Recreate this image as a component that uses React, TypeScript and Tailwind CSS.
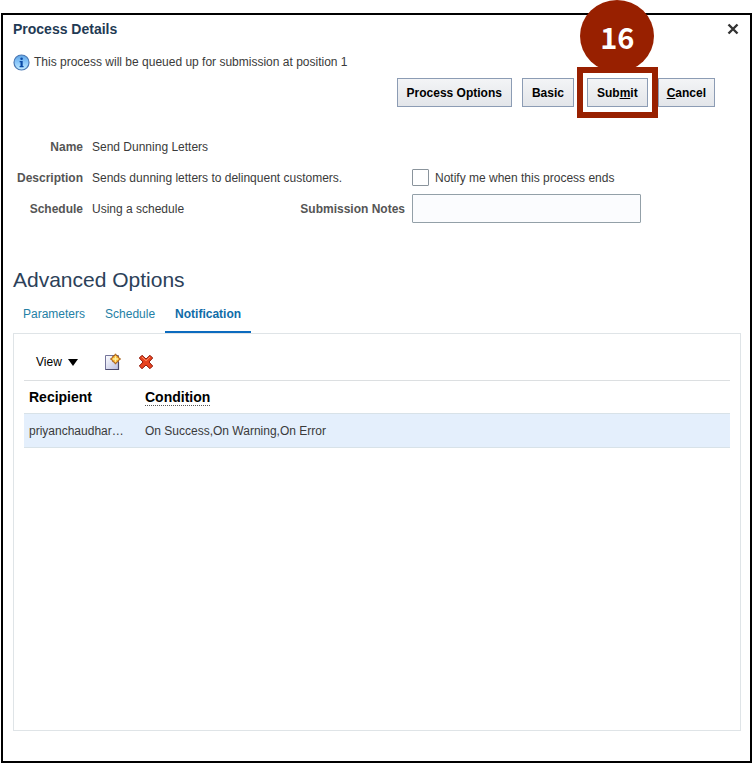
import React from 'react';

interface Notification {
  recipient: string;
  condition: string;
}

const notifications: Notification[] = [
  { recipient: 'priyanchaudhar…', condition: 'On Success,On Warning,On Error' },
];

const tabs = ['Parameters', 'Schedule', 'Notification'];

const buttonClass =
  'h-[29px] border border-[#8c9cb4] bg-linear-to-b from-[#f3f4f6] to-[#e3e6ea] font-bold text-black whitespace-nowrap';

const InfoIcon: React.FC = () => (
  <svg width="17" height="17" viewBox="0 0 17 17" aria-hidden="true">
    <defs>
      <linearGradient id="info" x1="0" y1="0" x2="0" y2="1">
        <stop offset="0" stopColor="#5fa5e6" />
        <stop offset="0.5" stopColor="#8cc8fa" />
        <stop offset="1" stopColor="#c4ecff" />
      </linearGradient>
    </defs>
    <circle cx="8.5" cy="8.5" r="7.5" fill="url(#info)" stroke="#4a78b4" strokeWidth="1.2" />
    <circle cx="8.6" cy="4.7" r="1.3" fill="#0b4aa6" />
    <path d="M6.6 7h3.1v5h.9v1.2H6.600V12h.9V8.200h-.9z" fill="#0b4aa6" />
  </svg>
);

const CreateIcon: React.FC = () => (
  <svg width="17" height="18" viewBox="0 0 17 18" aria-hidden="true">
    <defs>
      <linearGradient id="page" x1="0" y1="0" x2="1" y2="1">
        <stop offset="0" stopColor="#ffffff" />
        <stop offset="1" stopColor="#b9bde0" />
      </linearGradient>
    </defs>
    <path d="M1.500 2.500h13v14h-13z" fill="url(#page)" stroke="#74749a" />
    <path d="M14.500 9v7.500h-13" fill="none" stroke="#4a4a6c" strokeWidth="1.200" />
    <path d="M11.500 .8l1.500 2.200 1.300.3.300 1.300L16.600 6l-2 1.400-.3 1.300-1.300.3-1.500 2.200L10 9l-1.300-.3-.3-1.300L6.400 6l2-1.400.3-1.300L10 3z" fill="#f3a92a" stroke="#9a5416" strokeWidth="0.9" />
    <path d="M11.500 3.300v5.400M8.800 6h5.400" stroke="#fff3a0" strokeWidth="1.600" />
  </svg>
);

const DeleteIcon: React.FC = () => (
  <svg width="16" height="16" viewBox="0 0 16 16" aria-hidden="true">
    <path
      d="M4 1.300L8 5l4-3.700L14.700 4 11 8l3.700 4-2.700 2.700L8 11l-4 3.700L1.300 12 5 8 1.300 4z"
      fill="#e8431f"
      stroke="#8f1a0c"
      strokeLinejoin="round"
    />
    <path d="M4 3l4 3.700L12 3" fill="none" stroke="#ff9468" strokeWidth="1" />
  </svg>
);

const Callout: React.FC<{ step: number }> = ({ step }) => (
  <>
    <span className="absolute -top-[78px] left-1/2 flex h-[72px] w-[74px] -translate-x-1/2 items-center justify-center rounded-[50%] bg-[#982000] font-['Noto_Sans_CJK_SC',sans-serif] text-[29px] font-bold text-white">
      {step}
    </span>
    <span className="pointer-events-none absolute -inset-x-[10px] -inset-y-[11px] border-[6px] border-[#982000]" />
  </>
);

const App: React.FC = () => {
  return (
    <div className="flex min-h-screen flex-col bg-white pt-[13px] pl-px font-['Liberation_Sans',Arial,sans-serif] text-[12px] leading-4 text-[#3a3a3a]">
      <main className="flex flex-1 flex-col border-2 border-black pr-[9px] pb-[30px] pl-[10px]">
        <header className="flex h-7 items-center justify-between">
          <h1 className="text-[14px] font-bold text-[#1f3a54]">Process Details</h1>
          <button type="button" aria-label="Close" className="flex h-4 w-4 items-center justify-center">
            <svg width="12" height="12" viewBox="0 0 12 12">
              <path d="M1.500 1.500l9 9M10.500 1.500l-9 9" stroke="#333" strokeWidth="2.400" />
            </svg>
          </button>
        </header>

        <p className="mt-[11px] flex h-4 items-center gap-1">
          <InfoIcon />
          This process will be queued up for submission at position 1
        </p>

        <div className="mt-2 flex justify-end gap-[10px] pr-[26px]">
          <button type="button" className={`${buttonClass} px-[9px]`}>Process Options</button>
          <button type="button" className={`${buttonClass} px-[9px]`}>Basic</button>
          <div className="relative z-10 ml-[3px]">
            <button type="button" className={`${buttonClass} px-[9px]`}>
              Sub<u>m</u>it
            </button>
            <Callout step={16} />
          </div>
          <button type="button" className={`${buttonClass} px-2`}>
            <u>C</u>ancel
          </button>
        </div>

        <section className="mt-6 grid auto-rows-[31px] grid-cols-[70px_204px_118px_1fr] items-center">
          <span className="text-right font-bold text-[#555]">Name</span>
          <span className="col-span-3 pl-[9px]">Send Dunning Letters</span>

          <span className="text-right font-bold text-[#555]">Description</span>
          <span className="col-span-2 pl-[9px]">Sends dunning letters to delinquent customers.</span>
          <label className="ml-[7px] flex items-center gap-[6px]">
            <input type="checkbox" className="h-[17px] w-[17px] appearance-none rounded-[1px] border border-[#8a949c] bg-white" />
            Notify me when this process ends
          </label>

          <span className="text-right font-bold text-[#555]">Schedule</span>
          <span className="pl-[9px]">Using a schedule</span>
          <label htmlFor="notes" className="text-right font-bold whitespace-nowrap text-[#555]">Submission Notes</label>
          <input id="notes" type="text" className="ml-[7px] h-[29px] w-[229px] rounded-[1px] border border-[#93a0a8] bg-[#fbfcfe] px-2" />
        </section>

        <h2 className="mt-11 text-[21px] leading-6 text-[#2c4159]">Advanced Options</h2>

        <nav className="mt-[10px] flex">
          {tabs.map((tab) => (
            <a
              key={tab}
              href="#"
              className={`h-8 px-[10px] pt-1 ${
                tab === 'Notification'
                  ? 'border-b-[3px] border-[#0b6bbf] font-bold text-[#0f6ca8]'
                  : 'text-[#2480a5]'
              }`}
            >
              {tab}
            </a>
          ))}
        </nav>

        <section className="-mt-px flex-1 border border-[#dfe4e7] px-[10px] pt-[11px]">
          <div className="mb-px flex h-[34px] items-center pl-3">
            <button type="button" className="flex items-center gap-[6px] text-black">
              View
              <svg width="10" height="8" viewBox="0 0 10 8" aria-hidden="true">
                <path d="M0 1h10L5 8z" fill="#000" />
              </svg>
            </button>
            <button type="button" aria-label="Create" className="ml-[26px]">
              <CreateIcon />
            </button>
            <button type="button" aria-label="Delete" className="ml-[17px]">
              <DeleteIcon />
            </button>
          </div>

          <table className="w-full table-fixed border-collapse text-left">
            <thead>
              <tr className="h-[33px] border-t border-[#dcdfe1] text-[14px] text-black">
                <th className="w-[116px] pl-[5px]">Recipient</th>
                <th className="pl-[5px]">
                  <span className="border-b border-dotted border-[#555]">Condition</span>
                </th>
              </tr>
            </thead>
            <tbody>
              {notifications.map((item) => (
                <tr key={item.recipient} className="h-[34px] border-y border-[#d8e2e8] bg-[#e4effc]">
                  <td className="pl-[5px]">{item.recipient}</td>
                  <td className="pl-[5px]">{item.condition}</td>
                </tr>
              ))}
            </tbody>
          </table>
        </section>
      </main>
    </div>
  );
};

export default App;
